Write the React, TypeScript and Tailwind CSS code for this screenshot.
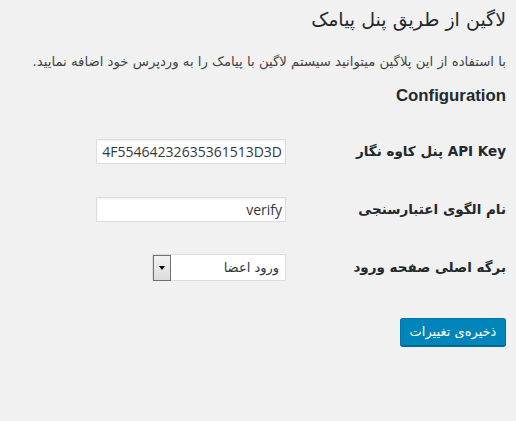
import React from "react"

const fa = "font-['Tahoma','DejaVu_Sans',sans-serif]"

export default function App() {
  const rows = [
    { label: "API Key پنل کاوه نگار", value: "4F55464232635361513D3D" },
    { label: "نام الگوی اعتبارسنجی", value: "verify" },
  ]

  return (
    <div dir="rtl" className={`min-h-screen w-[516px] bg-[#f1f1f1] pr-[10px] text-[#23282d] ${fa}`}>
      {/* Header */}
      <h2 className="pt-[5px] text-[19px] leading-[29px] font-normal">لاگین از طریق پنل پیامک</h2>
      <p className="mt-[19px] text-[13.25px] leading-[18px] text-[#444]">
        با استفاده از این پلاگین میتوانید سیستم لاگین با پیامک را به وردپرس خود اضافه نمایید.
      </p>
      <h3 className="mt-[15px] font-['Liberation_Sans',sans-serif] text-[16.8px] leading-[20px] font-bold">Configuration</h3>

      {/* Form rows */}
      <div className="mt-[33px] flex flex-col">
        {rows.map((row, i) => (
          <div key={i} className={`flex h-[25px] items-center ${i > 0 ? "mt-[33px]" : ""}`}>
            <div className="w-[220px] text-[13.5px] font-bold">{row.label}</div>
            <div className="flex h-[25px] w-[190px] items-center border border-[#ddd] bg-white px-[3px] font-['Open_Sans',sans-serif] text-[14px] text-[#32373c] shadow-[inset_0_1px_2px_rgba(0,0,0,0.07)]">
              {row.value}
            </div>
          </div>
        ))}

        <div className="mt-[32px] flex h-[27px] items-center">
          <div className="w-[220px] text-[13.5px] font-bold">برگه اصلی صفحه ورود</div>
          <div className="flex h-[27px] w-[134px] items-center justify-between border border-[#ddd] bg-white">
            <span className="pr-[6px] text-[13px] text-[#32373c]">ورود اعضا</span>
            <span className="flex h-[26px] w-[18px] items-center justify-center border border-[#707070] bg-gradient-to-b from-[#f2f2f2] to-[#dcdcdc]">
              <span className="h-0 w-0 border-x-[3.5px] border-t-[4px] border-x-transparent border-t-black" />
            </span>
          </div>
        </div>

        <div className="mt-[37px] flex">
          <button className="h-[28px] w-[106px] rounded-[3px] border border-[#0073aa] border-b-[#006799] bg-[#0085ba] text-[13px] text-white shadow-[0_1px_0_#006799]">
            ذخیره‌ی تغییرات
          </button>
        </div>
      </div>
    </div>
  )
}
